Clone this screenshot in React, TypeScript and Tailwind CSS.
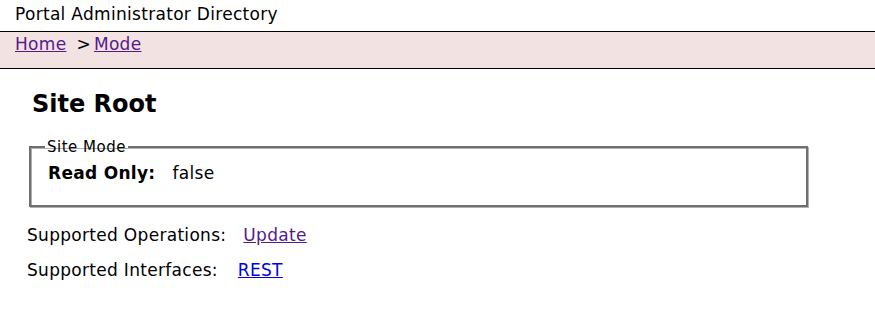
export default function App() {
  return (
    <div className="min-h-screen bg-white text-black text-[17px] leading-[20px] tracking-[0.3px] font-['DejaVu_Sans',sans-serif]">
      <div className="h-[31px] px-[15px] pt-[4px]">Portal Administrator Directory</div>

      <div className="border-y border-black bg-[#f2e2e2] px-[15px] pt-[2px] pb-[14px]">
        <a href="#" className="text-[#551a8b] underline">
          Home
        </a>
        <span className="ml-[10px] mr-[3px]">&gt;</span>
        <a href="#" className="text-[#551a8b] underline">
          Mode
        </a>
      </div>

      <h1 className="mt-[21px] ml-[32px] text-[24px] leading-[28px] font-bold tracking-normal">Site Root</h1>

      <fieldset className="mt-[20px] ml-[29px] mr-[67px] border-2 border-[#6f6f6f] pl-[17px] pt-[7px] pb-[22px] shadow-[inset_1px_1px_0_#b0b0b0,1px_1px_0_#b0b0b0]">
        <legend className="-ml-[3px] px-[2px] text-[15px] leading-[18px] tracking-[0.5px]">Site Mode</legend>
        <div>
          <span className="font-bold">Read Only:</span>
          <span className="ml-[17px]">false</span>
        </div>
      </fieldset>

      <div className="mt-[18px] ml-[27px] flex flex-col gap-[15px]">
        <div>
          <span>Supported Operations:</span>
          <a href="#" className="ml-[17px] text-[#551a8b] underline">
            Update
          </a>
        </div>
        <div>
          <span>Supported Interfaces:</span>
          <a href="#" className="ml-[20px] text-[#0000ee] underline">
            REST
          </a>
        </div>
      </div>
    </div>
  );
}
